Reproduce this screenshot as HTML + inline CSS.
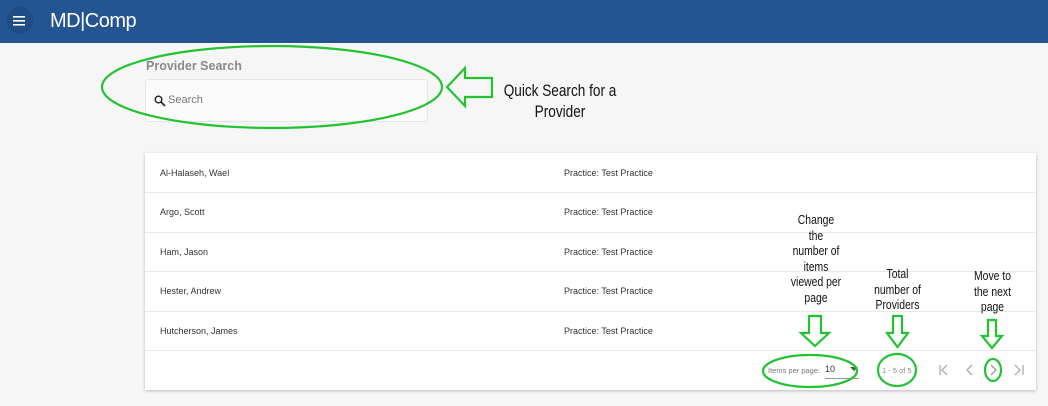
<!DOCTYPE html>
<html><head><style>
body{margin:0;width:1048px;height:406px;background:#f6f6f6;font-family:"Liberation Sans",sans-serif;position:relative;overflow:hidden}
.hdr{position:absolute;left:0;top:0;width:1048px;height:43px;background:#235592}
.menu{position:absolute;left:7px;top:7px;width:26px;height:27px;border-radius:13px;background:#1f4c84}
.logo{position:absolute;left:50px;top:10px;color:#fff;font-size:20px;letter-spacing:-0.5px}
.lbl{position:absolute;left:146px;top:59px;font-size:12.5px;font-weight:bold;color:#8a8a8a}
.search{position:absolute;left:145px;top:79px;width:281px;height:41px;background:#fbfbfb;border:1px solid #e6e6e6;border-radius:3px}
.search span{position:absolute;left:22px;top:14px;font-size:11px;color:#777}
.card{position:absolute;left:145px;top:153px;width:891px;height:237px;background:#fff;box-shadow:0 1px 3px rgba(0,0,0,.25)}
.row{position:absolute;left:0;width:891px;height:39px;border-bottom:1px solid #e8e8e8;font-size:9px;color:#333}
.row .n{position:absolute;left:15px;top:15px}
.row .p{position:absolute;left:419px;top:15px}
.t{position:absolute;color:#111;text-align:center;line-height:15.5px;font-size:13px;transform:scaleX(0.8);transform-origin:center top}
.sm{position:absolute;font-size:7.5px;color:#777;white-space:nowrap}
</style></head><body>
<div class="hdr"><div class="menu"></div>
<svg style="position:absolute;left:13px;top:15px" width="13" height="11"><rect y="1" width="12" height="1.6" fill="#fff"/><rect y="5" width="12" height="1.6" fill="#fff"/><rect y="9" width="12" height="1.6" fill="#fff"/></svg>
<div class="logo">MD|Comp</div></div>
<div class="lbl">Provider Search</div>
<div class="search"><svg style="position:absolute;left:8px;top:15px" width="12" height="12"><circle cx="4.5" cy="4.5" r="3.3" fill="none" stroke="#222" stroke-width="1.4"/><line x1="7" y1="7" x2="11" y2="11" stroke="#222" stroke-width="1.6"/></svg><span>Search</span></div>
<div class="t" style="left:480px;top:80px;width:160px;font-size:17px;line-height:21px">Quick Search for a<br>Provider</div>
<div class="card">
<div class="row" style="top:0"><span class="n">Al-Halaseh, Wael</span><span class="p">Practice: Test Practice</span></div>
<div class="row" style="top:39px;height:40px"><span class="n">Argo, Scott</span><span class="p">Practice: Test Practice</span></div>
<div class="row" style="top:79px"><span class="n">Ham, Jason</span><span class="p">Practice: Test Practice</span></div>
<div class="row" style="top:118px;height:40px"><span class="n">Hester, Andrew</span><span class="p">Practice: Test Practice</span></div>
<div class="row" style="top:158px"><span class="n">Hutcherson, James</span><span class="p">Practice: Test Practice</span></div>
<div class="sm" style="left:623px;top:213px">Items per page:</div>
<div style="position:absolute;left:680px;top:211px;font-size:9px;color:#333">10</div>
<div style="position:absolute;left:680px;top:225px;width:34px;border-bottom:1px solid #999"></div>
<svg style="position:absolute;left:705px;top:214px" width="8" height="5"><path d="M0 0L4 4L8 0Z" fill="#555"/></svg>
<div class="sm" style="left:737px;top:213px;color:#888">1 - 5 of 5</div>
<svg style="position:absolute;left:790px;top:209px" width="100" height="16" fill="none" stroke="#aaa" stroke-width="1.3"><path d="M5 3V13M12 3L7 8L12 13"/><path d="M37 3L32 8L37 13"/><path d="M56 3L61 8L56 13" stroke="#999"/><path d="M80 3L85 8L80 13M88 3V13"/></svg>
</div>
<div class="t" style="left:776px;top:212px;width:80px">Change<br>the<br>number of<br>items<br>viewed per<br>page</div>
<div class="t" style="left:860px;top:266px;width:75px">Total<br>number of<br>Providers</div>
<div class="t" style="left:960px;top:268px;width:65px">Move to<br>the next<br>page</div>
<svg style="position:absolute;left:0;top:0" width="1048" height="406" fill="none" stroke="#22c232" stroke-width="2.2">
<ellipse cx="272" cy="87" rx="170" ry="41"/>
<path d="M492 78V97H465V106L447 87L465 68V78Z"/>
<ellipse cx="810" cy="371" rx="47" ry="16"/>
<ellipse cx="897" cy="370" rx="19" ry="16"/>
<ellipse cx="993" cy="370" rx="8" ry="11"/>
<path d="M809 316H821V333H829L815 346L801 333H809Z"/>
<path d="M893 316H902V333H908L897.5 347L887 333H893Z"/>
<path d="M988 320H996V336H1002L992 348L982 336H988Z"/>
</svg>
</body></html>
